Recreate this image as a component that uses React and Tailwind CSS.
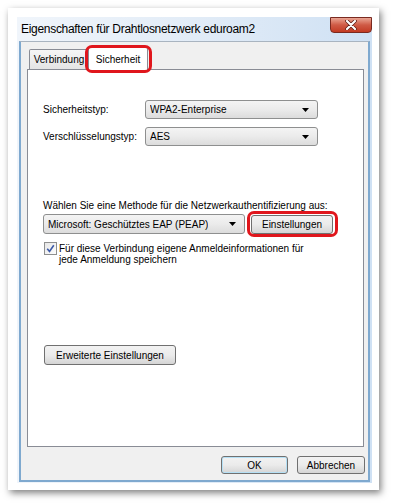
import React from 'react';

const font = { fontFamily: '"Liberation Sans", Arial, sans-serif' };

// small black down triangle used by the combo boxes
const Caret = () => (
  <svg width="7" height="4" viewBox="0 0 7 4" className="shrink-0">
    <path d="M0 0 L7 0 L3.5 4 Z" fill="#000" />
  </svg>
);

const Combo = ({ value, className = '' }) => (
  <div
    className={`flex items-center justify-between pl-[4px] pr-[8px] border border-[#8e8f8f] rounded-[3px] bg-gradient-to-b from-[#f4f4f4] via-[#ebebeb] to-[#dcdcdc] text-[10px] text-black ${className}`}
  >
    <span className="truncate">{value}</span>
    <Caret />
  </div>
);

const Button = ({ children, className = '' }) => (
  <div
    className={`flex items-center justify-center border border-[#707070] rounded-[3px] bg-gradient-to-b from-[#f2f2f2] via-[#ebebeb] to-[#d5d5d5] text-[10px] text-black ${className}`}
  >
    {children}
  </div>
);

const Highlight = ({ className }) => (
  <div className={`absolute border-[3px] border-[#e0161c] rounded-[7px] pointer-events-none ${className}`} />
);

export default function App() {
  return (
    <div className="w-[393px] h-[504px] bg-white pt-[8px] pl-[8px] overflow-hidden" style={font}>
      {/* screenshot frame */}
      <div className="w-[371px] h-[482px] bg-white pt-[9px] pl-[9px] shadow-[2px_3px_7px_rgba(0,0,0,0.5)]">
        {/* window */}
        <div className="w-[355px] h-[466px] flex flex-col bg-gradient-to-r from-[#f0f5fb] via-[#e2ecf7] to-[#cfe1f4]">
          {/* title bar */}
          <div className="h-[24px] flex items-start justify-between">
            <span className="self-center pl-[4px] text-[12px] tracking-[-0.3px] text-black leading-none">
              Eigenschaften für Drahtlosnetzwerk eduroam2
            </span>
            <div className="w-[42px] h-[16px] flex items-center justify-center border border-[#7a2a20] rounded-b-[4px] bg-gradient-to-b from-[#e9a594] via-[#cf5a45] to-[#c23a22]">
              <svg width="12" height="10" viewBox="0 0 12 10">
                <path d="M2 1 L10 9 M10 1 L2 9" stroke="#5a1a12" strokeWidth="3.6" strokeLinecap="round" />
                <path d="M2 1 L10 9 M10 1 L2 9" stroke="#fff" strokeWidth="2.2" strokeLinecap="round" />
              </svg>
            </div>
          </div>

          {/* body */}
          <div className="flex-1 mx-[2px] mb-[1px] flex flex-col bg-[#f0f0f0] border-t border-t-[#a9b4c0] border-x-2 border-b-2 border-x-[#7fa9cf] border-b-[#7fa9cf]">
            <div className="ml-[6px] mr-[4px] mt-[2px] flex flex-col">
              {/* tabs */}
              <div className="h-[25px] flex items-end pl-[2px]">
                <div className="w-[60px] h-[20px] flex items-center justify-center border border-[#898c95] border-b-0 rounded-t-[2px] bg-gradient-to-b from-[#f6f6f6] to-[#e4e4e4] text-[10px] text-black">
                  Verbindung
                </div>
                <div className="relative w-[60px] h-[23px] -ml-px -mb-px flex items-center justify-center border border-[#898c95] border-b-0 rounded-t-[2px] bg-white text-[10px] text-black z-10">
                  Sicherheit
                  <Highlight className="-left-[4px] -top-[3px] -right-[5px] -bottom-[3px]" />
                </div>
              </div>

              {/* tab page */}
              <div className="h-[378px] border border-[#898c95] bg-white pl-[15px] pt-[30px] flex flex-col text-[10px] text-black">
                <div className="flex items-center h-[19px]">
                  <span className="w-[102px]">Sicherheitstyp:</span>
                  <Combo value="WPA2-Enterprise" className="w-[173px] h-[19px]" />
                </div>
                <div className="flex items-center h-[19px] mt-[8px]">
                  <span className="w-[102px]">Verschlüsselungstyp:</span>
                  <Combo value="AES" className="w-[173px] h-[19px]" />
                </div>

                <div className="mt-[53px] h-[14px] leading-[14px]">
                  Wählen Sie eine Methode für die Netzwerkauthentifizierung aus:
                </div>
                <div className="mt-[1px] flex items-start">
                  <Combo value="Microsoft: Geschütztes EAP (PEAP)" className="w-[202px] h-[20px]" />
                  <div className="relative ml-[6px] mt-[1px]">
                    <Button className="w-[82px] h-[19px]">Einstellungen</Button>
                    <Highlight className="-left-[4px] -top-[4px] -right-[5px] -bottom-[3px]" />
                  </div>
                </div>

                <div className="mt-[8px] flex items-start">
                  <div className="w-[13px] h-[13px] ml-px shrink-0 flex items-center justify-center border border-[#8e8f8f] bg-gradient-to-br from-[#e6e6e6] to-[#fdfdfd]">
                    <svg width="9" height="9" viewBox="0 0 9 9">
                      <path d="M1.2 4.8 L3.5 7.4 L7.8 1.2" fill="none" stroke="#3c5aa8" strokeWidth="1.6" />
                    </svg>
                  </div>
                  <div className="ml-[2px] leading-[11px] mt-[1px]">
                    Für diese Verbindung eigene Anmeldeinformationen für
                    <br />
                    jede Anmeldung speichern
                  </div>
                </div>

                <Button className="mt-[80px] ml-px w-[132px] h-[20px]">Erweiterte Einstellungen</Button>
              </div>
            </div>

            {/* dialog buttons */}
            <div className="mt-[9px] flex justify-end gap-[9px] pr-[3px]">
              <Button className="w-[67px] h-[18px] border-[#3c7fb1] shadow-[inset_0_0_0_1px_#b5e0f5]">OK</Button>
              <Button className="w-[68px] h-[18px]">Abbrechen</Button>
            </div>
          </div>
        </div>
      </div>
    </div>
  );
}
